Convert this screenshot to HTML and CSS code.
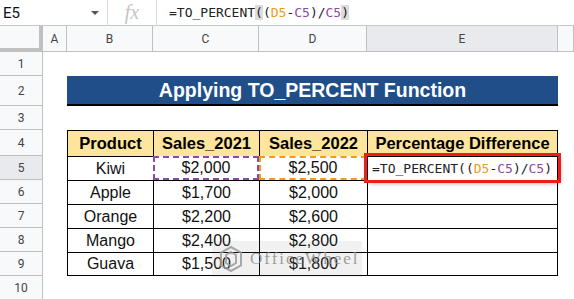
FILE: index.html
```html
<!DOCTYPE html>
<html lang="en">
<head>
    <meta charset="UTF-8">
    <meta name="viewport" content="width=device-width, initial-scale=1.0">
    <title>TO_PERCENT</title>
    <link rel="stylesheet" href="styles.css">
</head>
<body>
    <div class="formula-bar">
        <div class="name-box">
            <span>E5</span>
            <span class="caret"></span>
        </div>
        <div class="fx">fx</div>
        <div class="formula">=TO_PERCENT<span class="paren">(</span>(<span class="ref-d">D5</span>-<span class="ref-c">C5</span>)/<span class="ref-c">C5</span><span class="paren">)</span></div>
    </div>

    <div class="sheet">
        <!-- column headers -->
        <div class="corner"></div>
        <div class="col-head">A</div>
        <div class="col-head">B</div>
        <div class="col-head">C</div>
        <div class="col-head">D</div>
        <div class="col-head active">E</div>
        <div class="col-head"></div>

        <!-- row 1 -->
        <div class="row-head">1</div>
        <div class="cell"></div><div class="cell"></div><div class="cell"></div><div class="cell"></div><div class="cell"></div><div class="cell"></div>

        <!-- row 2 -->
        <div class="row-head">2</div>
        <div class="cell"></div>
        <div class="title">Applying TO_PERCENT Function</div>
        <div class="cell"></div>

        <!-- row 3 -->
        <div class="row-head">3</div>
        <div class="cell"></div><div class="cell"></div><div class="cell"></div><div class="cell"></div><div class="cell"></div><div class="cell"></div>

        <!-- row 4 -->
        <div class="row-head">4</div>
        <div class="cell"></div>
        <div class="tc th">Product</div>
        <div class="tc th">Sales_2021</div>
        <div class="tc th">Sales_2022</div>
        <div class="tc th last">Percentage Difference</div>
        <div class="cell"></div>

        <!-- row 5 -->
        <div class="row-head active">5</div>
        <div class="cell"></div>
        <div class="tc">Kiwi</div>
        <div class="tc sel-c">$2,000</div>
        <div class="tc sel-d">$2,500</div>
        <div class="tc last edit">=TO_PERCENT((<span class="ref-d">D5</span>-<span class="ref-c">C5</span>)/<span class="ref-c">C5</span>)</div>
        <div class="cell"></div>

        <!-- row 6 -->
        <div class="row-head">6</div>
        <div class="cell"></div>
        <div class="tc">Apple</div>
        <div class="tc">$1,700</div>
        <div class="tc">$2,000</div>
        <div class="tc last"></div>
        <div class="cell"></div>

        <!-- row 7 -->
        <div class="row-head">7</div>
        <div class="cell"></div>
        <div class="tc">Orange</div>
        <div class="tc">$2,200</div>
        <div class="tc">$2,600</div>
        <div class="tc last"></div>
        <div class="cell"></div>

        <!-- row 8 -->
        <div class="row-head">8</div>
        <div class="cell"></div>
        <div class="tc">Mango</div>
        <div class="tc">$2,400</div>
        <div class="tc">$2,800</div>
        <div class="tc last"></div>
        <div class="cell"></div>

        <!-- row 9 -->
        <div class="row-head">9</div>
        <div class="cell"></div>
        <div class="tc bottom">Guava</div>
        <div class="tc bottom">$1,500</div>
        <div class="tc bottom">$1,800</div>
        <div class="tc last bottom"></div>
        <div class="cell"></div>

        <!-- row 10 -->
        <div class="row-head">10</div>
        <div class="cell"></div><div class="cell"></div><div class="cell"></div><div class="cell"></div><div class="cell"></div><div class="cell"></div>
    </div>

    <div class="watermark">
        <svg width="26" height="28" viewBox="0 0 26 28">
            <path d="M13 2 L23 7.5 V20.5 L13 26 L3 20.5 V7.5 Z" fill="none" stroke="#9a9a9a" stroke-width="2"/>
            <path d="M13 7 L18 10 V18 L13 21 L8 18 V10 Z" fill="none" stroke="#9a9a9a" stroke-width="2"/>
        </svg>
        <span>OfficeWheel</span>
    </div>
</body>
</html>
```

FILE: styles.css
```css
body {
    margin: 0;
    background-color: #fff;
    font-family: "Liberation Sans", Arial, sans-serif;
    overflow: hidden;
}

/* formula bar */
.formula-bar {
    display: flex;
    height: 26px;
    box-sizing: border-box;
    border-bottom: 1px solid #c7c7c7;
    align-items: center;
}
.name-box {
    width: 108px;
    height: 26px;
    display: flex;
    align-items: center;
    justify-content: space-between;
    padding: 0 8px 0 3px;
    box-sizing: border-box;
    font-family: Roboto, sans-serif;
    font-size: 15px;
    color: #111;
    border-right: 1px solid #dadce0;
}
.caret {
    width: 0;
    height: 0;
    border-left: 4px solid transparent;
    border-right: 4px solid transparent;
    border-top: 4px solid #555;
}
.fx {
    width: 48px;
    height: 26px;
    line-height: 24px;
    text-align: center;
    font-family: "Liberation Serif", serif;
    font-style: italic;
    font-size: 20px;
    color: #c4c4c4;
    border-right: 1px solid #dadce0;
}
.formula {
    padding-left: 12px;
    font-family: "DejaVu Sans Mono", monospace;
    font-size: 13px;
    color: #222;
}
.paren {
    background-color: #dcdcdc;
}
.ref-d {
    color: #f29b1b;
}
.ref-c {
    color: #8c4aa8;
}

/* sheet grid */
.sheet {
    display: grid;
    grid-template-columns: 43px 24px 86px 106px 108px 191px 1fr;
    grid-template-rows: 26px 24px 30px 24px 26px 24px 24px 24px 24px 24px 24px;
}
.corner {
    background-color: #f8f9fa;
    border-right: 4px solid #c0c0c0;
    border-bottom: 4px solid #c0c0c0;
}
.col-head {
    background-color: #f8f9fa;
    border-right: 1px solid #c0c0c0;
    border-bottom: 1px solid #c0c0c0;
    display: flex;
    align-items: center;
    justify-content: center;
    font-family: Roboto, sans-serif;
    font-size: 12px;
    color: #444;
}
.row-head {
    background-color: #f8f9fa;
    border-right: 1px solid #c0c0c0;
    border-bottom: 1px solid #c0c0c0;
    display: flex;
    align-items: center;
    justify-content: center;
    font-family: Roboto, sans-serif;
    font-size: 12px;
    color: #444;
}
.col-head.active, .row-head.active {
    background-color: #e8eaed;
}

/* title */
.title {
    grid-column: 3 / 7;
    background-color: #1f4e89;
    border-bottom: 2px solid #000;
    color: #fff;
    font-weight: bold;
    font-size: 19.5px;
    display: flex;
    align-items: center;
    justify-content: center;
}

/* table cells */
.tc {
    border-left: 1px solid #000;
    border-top: 1px solid #000;
    display: flex;
    align-items: center;
    justify-content: center;
    font-size: 16px;
    color: #111;
}
.tc.last {
    border-right: 1px solid #000;
}
.tc.bottom {
    border-bottom: 1px solid #000;
}
.th {
    background-color: #fee59d;
    font-weight: bold;
    font-size: 16.5px;
    color: #000;
}
.sel-c {
    border: 2px dashed #8c4aa8;
}
.sel-d {
    border: 2px dashed #f29b1b;
}
.edit {
    position: relative;
    z-index: 2;
    justify-content: flex-start;
    padding-left: 4px;
    font-family: "DejaVu Sans Mono", monospace;
    font-size: 13px;
    color: #222;
    background-color: #fff;
    outline: 3px solid #ee1c1c;
    box-shadow: 2px 3px 5px rgba(0, 0, 0, 0.35);
}

/* watermark overlay */
.watermark {
    position: absolute;
    left: 212px;
    top: 241px;
    width: 150px;
    height: 36px;
    display: flex;
    align-items: center;
    gap: 6px;
    padding-left: 6px;
    box-sizing: border-box;
    background-color: rgba(120, 120, 120, 0.12);
    color: #8e8e8e;
    font-family: "Liberation Serif", serif;
    font-size: 17px;
    letter-spacing: 2px;
    opacity: 0.85;
}
```
